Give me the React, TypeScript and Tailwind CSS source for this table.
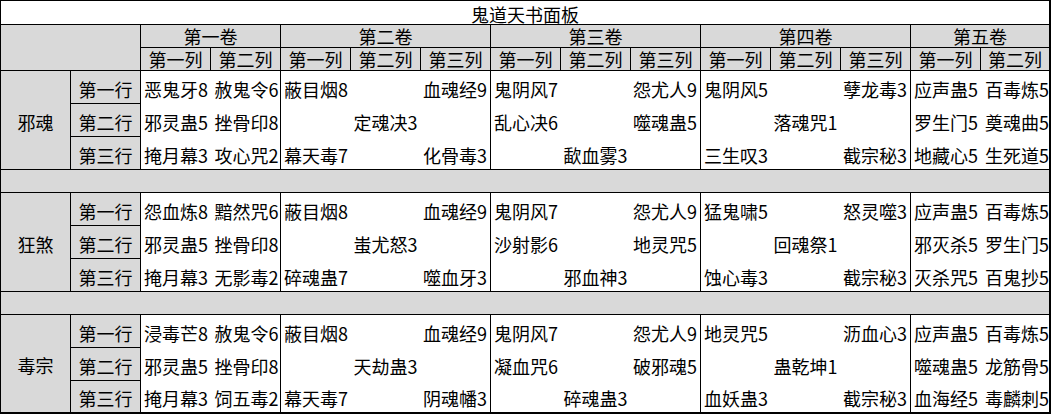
import React from "react";

type Item = string | [string, string];

const vols = [
  { name: "第一卷", cols: ["第一列", "第二列"] },
  { name: "第二卷", cols: ["第一列", "第二列", "第三列"] },
  { name: "第三卷", cols: ["第一列", "第二列", "第三列"] },
  { name: "第四卷", cols: ["第一列", "第二列", "第三列"] },
  { name: "第五卷", cols: ["第一列", "第二列"] },
];

const rowNames = ["第一行", "第二行", "第三行"];

const groups: { name: string; rows: Item[][] }[] = [
  {
    name: "邪魂",
    rows: [
      [["恶鬼牙8", "赦鬼令6"], ["蔽目烟8", "血魂经9"], ["鬼阴风7", "怨尤人9"], ["鬼阴风5", "孽龙毒3"], ["应声蛊5", "百毒炼5"]],
      [["邪灵蛊5", "挫骨印8"], "定魂决3", ["乱心决6", "噬魂蛊5"], "落魂咒1", ["罗生门5", "奠魂曲5"]],
      [["掩月幕3", "攻心咒2"], ["幕天毒7", "化骨毒3"], "歃血雾3", ["三生叹3", "截宗秘3"], ["地藏心5", "生死道5"]],
    ],
  },
  {
    name: "狂煞",
    rows: [
      [["怨血炼8", "黯然咒6"], ["蔽目烟8", "血魂经9"], ["鬼阴风7", "怨尤人9"], ["猛鬼啸5", "怒灵噬3"], ["应声蛊5", "百毒炼5"]],
      [["邪灵蛊5", "挫骨印8"], "蚩尤怒3", ["沙射影6", "地灵咒5"], "回魂祭1", ["邪灭杀5", "罗生门5"]],
      [["掩月幕3", "无影毒2"], ["碎魂蛊7", "噬血牙3"], "邪血神3", ["蚀心毒3", "截宗秘3"], ["灭杀咒5", "百鬼抄5"]],
    ],
  },
  {
    name: "毒宗",
    rows: [
      [["浸毒芒8", "赦鬼令6"], ["蔽目烟8", "血魂经9"], ["鬼阴风7", "怨尤人9"], ["地灵咒5", "沥血心3"], ["应声蛊5", "百毒炼5"]],
      [["邪灵蛊5", "挫骨印8"], "天劫蛊3", ["凝血咒6", "破邪魂5"], "蛊乾坤1", ["噬魂蛊5", "龙筋骨5"]],
      [["掩月幕3", "饲五毒2"], ["幕天毒7", "阴魂幡3"], "碎魂蛊3", ["血妖蛊3", "截宗秘3"], ["血海经5", "毒麟刺5"]],
    ],
  },
];

const spans = ["col-span-2", "col-span-3", "col-span-3", "col-span-3", "col-span-2"];

function VolCell({ item, vi, bottom }: { item: Item; vi: number; bottom: boolean }) {
  const twoCol = vi === 0 || vi === 4;
  const cls = [
    spans[vi],
    "flex items-center pt-[3px] bg-white",
    vi < 4 ? "border-r border-black" : "",
    bottom ? "border-b border-black" : "",
  ].join(" ");

  if (typeof item === "string") {
    return <div className={cls + " justify-center"}>{item}</div>;
  }
  if (twoCol) {
    return (
      <div className={cls + " grid " + (vi === 4 ? "grid-cols-[70px_68px]" : "grid-cols-2")}>
        <span className="pl-[3px]">{item[0]}</span>
        <span className="pl-[4px]">{item[1]}</span>
      </div>
    );
  }
  return (
    <div className={cls + " justify-between px-[3px]"}>
      <span>{item[0]}</span>
      <span>{item[1]}</span>
    </div>
  );
}

export default function App() {
  return (
    <div className="w-[1051px] bg-white text-[18px] leading-none text-black font-['Noto_Sans_CJK_SC',sans-serif]">
      <div className="grid grid-cols-[repeat(14,70px)_68px] grid-rows-[24px_23px_23px_33px_33px_33px_23px_33px_33px_33px_23px_33px_33px_31px] border-t border-l border-r-2 border-b-2 border-black">
        <div className="col-span-15 flex items-center justify-center border-b border-black pt-[2px]">
          鬼道天书面板
        </div>

        <div className="col-span-2 row-span-2 bg-[#d9d9d9] border-r border-b border-black" />
        {vols.map((v, i) => (
          <div
            key={v.name}
            className={`${spans[i]} flex items-end justify-center pb-[2px] bg-[#d9d9d9] border-b border-black ${i < 4 ? "border-r" : ""}`}
          >
            {v.name}
          </div>
        ))}
        {vols.flatMap((v, i) =>
          v.cols.map((c, j) => (
            <div
              key={v.name + c}
              className={`flex items-end justify-center pb-[2px] bg-[#d9d9d9] border-b border-black ${
                i === 4 && j === 1 ? "" : "border-r"
              }`}
            >
              {c}
            </div>
          ))
        )}

        {groups.map((g, gi) => {
          const last = gi === groups.length - 1;
          return (
            <React.Fragment key={g.name}>
              <div
                className={`row-span-3 flex items-center justify-center pt-[3px] bg-[#d9d9d9] border-r border-black ${
                  last ? "" : "border-b"
                }`}
              >
                {g.name}
              </div>
              {g.rows.map((row, ri) => (
                <React.Fragment key={ri}>
                  <div
                    className={`flex items-center justify-center pt-[3px] bg-[#d9d9d9] border-r border-black ${
                      last && ri === 2 ? "" : "border-b"
                    }`}
                  >
                    {rowNames[ri]}
                  </div>
                  {row.map((item, vi) => (
                    <VolCell key={vi} item={item} vi={vi} bottom={ri === 2 && !last} />
                  ))}
                </React.Fragment>
              ))}
              {!last && <div className="col-span-15 bg-[#d9d9d9] border-b border-black" />}
            </React.Fragment>
          );
        })}
      </div>
    </div>
  );
}
